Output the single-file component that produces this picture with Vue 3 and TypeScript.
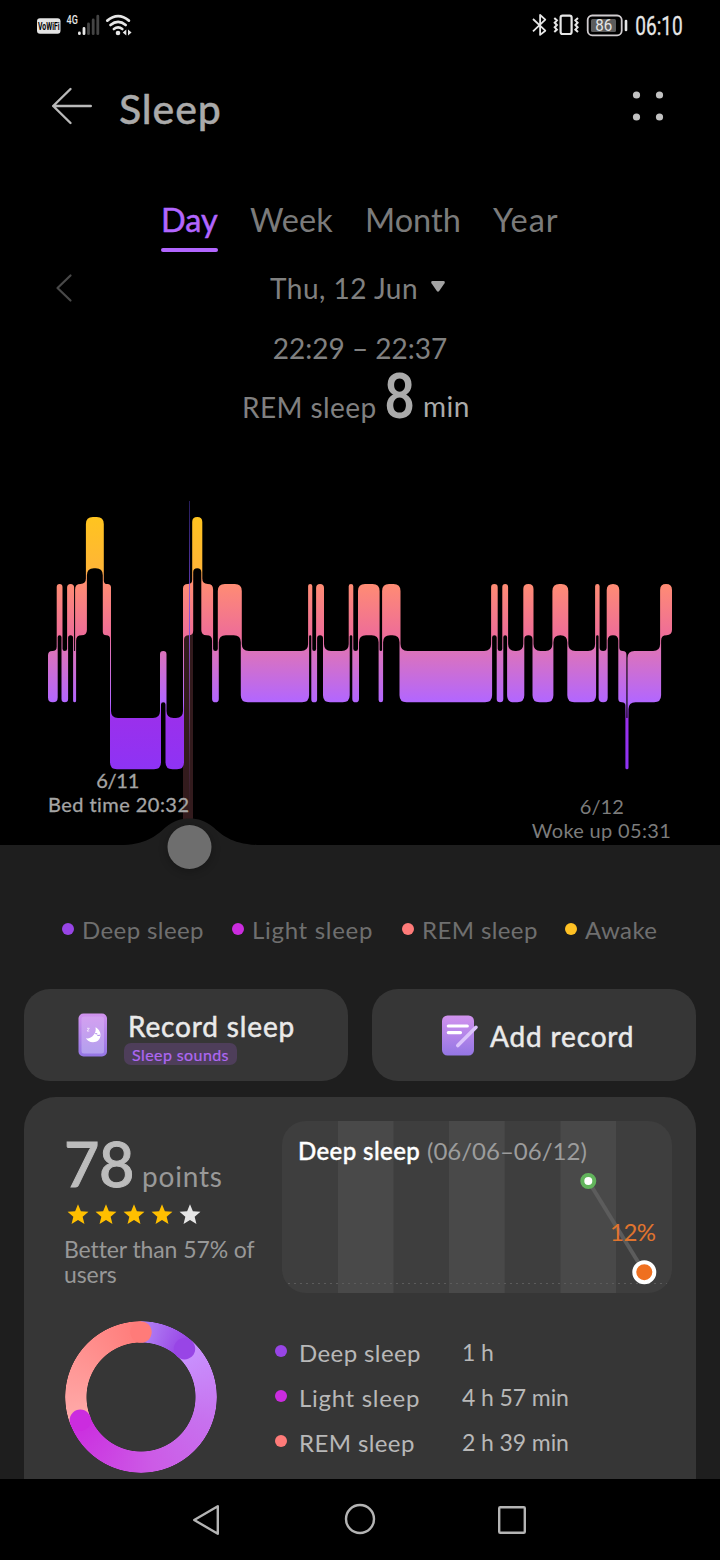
<script setup lang="ts">
interface Stage { label: string; color: string; value?: string }
type Level = 'awake' | 'rem' | 'light' | 'deep'
interface Point { x: number; y: number }

const stages: Stage[] = [
  { label: 'Deep sleep', color: '#9845e6', value: '1 h' },
  { label: 'Light sleep', color: '#cb2cdf', value: '4 h 57 min' },
  { label: 'REM sleep', color: '#ff7b79', value: '2 h 39 min' },
  { label: 'Awake', color: '#ffc124' },
]
const breakdown = stages.slice(0, 3)
const tabs = ['Day', 'Week', 'Month', 'Year']

const tops: Record<Level, number> = { awake: 517, rem: 584, light: 651, deep: 718 }
const BAR = 51.3

// Each entry is a stage and the x at which it ends.
const segments: [Level, number][] = [
  ['light', 57.2], ['rem', 62], ['light', 67.6], ['rem', 73.6], ['light', 75.6], ['rem', 86.4],
  ['awake', 103.3], ['rem', 110.5], ['deep', 160.5], ['light', 166], ['deep', 183.5],
  ['rem', 192.7], ['awake', 201.8], ['rem', 212.6], ['light', 218.3], ['rem', 241.3],
  ['light', 308.6], ['rem', 311.8], ['light', 316.6], ['rem', 323.5], ['light', 349.2],
  ['rem', 352.8], ['light', 358.5], ['rem', 379.1], ['light', 382.6], ['rem', 400],
  ['light', 491.6], ['rem', 497.2], ['light', 502.8], ['rem', 507.6], ['light', 523.8],
  ['rem', 533], ['light', 552.9], ['rem', 567.8], ['light', 595.6], ['rem', 599.1],
  ['light', 607.2], ['rem', 618.8], ['light', 625.9], ['deep', 628], ['light', 660.6], ['rem', 672],
]

// Closed ribbon: upper contour left to right, lower contour back, corners rounded.
function ribbon(): string {
  const half = 0.5
  const upper: Point[] = [{ x: 48, y: tops[segments[0][0]] }]
  const lower: Point[] = [{ x: 48, y: tops[segments[0][0]] + BAR }]
  for (let i = 0; i < segments.length - 1; i++) {
    const [level, x] = segments[i]
    const a = tops[level]
    const b = tops[segments[i + 1][0]]
    const shift = b < a ? -half : half
    upper.push({ x: x + shift, y: a }, { x: x + shift, y: b })
    lower.push({ x: x - shift, y: a + BAR }, { x: x - shift, y: b + BAR })
  }
  const last = segments[segments.length - 1]
  upper.push({ x: last[1], y: tops[last[0]] })
  lower.push({ x: last[1], y: tops[last[0]] + BAR })
  const pts = [...upper, ...lower.reverse()]
  const n = pts.length
  const dist = (p: Point, q: Point) => Math.abs(p.x - q.x) + Math.abs(p.y - q.y)
  const toward = (p: Point, q: Point, r: number): string => {
    const d = dist(p, q) || 1
    return `${(p.x + ((q.x - p.x) * r) / d).toFixed(2)} ${(p.y + ((q.y - p.y) * r) / d).toFixed(2)}`
  }
  let d = ''
  pts.forEach((p, i) => {
    const prev = pts[(i + n - 1) % n]
    const next = pts[(i + 1) % n]
    const r = Math.min(7, dist(p, prev) / 2, dist(p, next) / 2)
    d += `${i ? 'L' : 'M'}${toward(p, prev, r)}Q${p.x} ${p.y} ${toward(p, next, r)}`
  })
  return d + 'Z'
}
const sleepPath = ribbon()

function star(cx: number): string {
  const pts: string[] = []
  for (let i = 0; i < 10; i++) {
    const r = i % 2 ? 4.9 : 11
    const a = -Math.PI / 2 + (i * Math.PI) / 5
    pts.push(`${(cx + r * Math.cos(a)).toFixed(2)},${(13.2 + r * Math.sin(a)).toFixed(2)}`)
  }
  return pts.join(' ')
}
</script>

<template>
  <div class="page">
    <div class="status">
      <svg width="720" height="50" viewBox="0 0 720 50">
        <rect x="37" y="18.3" width="23.5" height="15.4" rx="3" fill="#e4e4e4" />
        <text x="38" y="29.800" class="vowifi" textLength="21.500" lengthAdjust="spacingAndGlyphs">VoWiFi</text>
        <text x="66.500" y="24.300" class="net" textLength="11.300" lengthAdjust="spacingAndGlyphs">4G</text>
        <g stroke-width="2.8" stroke-linecap="round" stroke="#e6e6e6">
          <path d="M79.4 33v.7M84 28.4v5.3" />
          <path d="M88.5 24v9.7M93.2 20v13.7M97.8 16.2v17.5" stroke="#444" />
        </g>
        <g fill="none" stroke="#e6e6e6" stroke-width="2.7" stroke-linecap="round">
          <path d="M107.3 20.600q10.800-9 21.600 0M110.500 25q7.600-6.200 15.200 0M113.900 29q4.200-3.200 8.400 0" />
        </g>
        <circle cx="118" cy="33" r="2.300" fill="#e6e6e6" />
        <path d="M126.300 29.400v6.200l-3.600-3.100zM128 29.400v6.200l3.600-3.100z" fill="#e6e6e6" />
        <path d="M533 19l12.300 11.700-5.200 4.200V15l5.200 4.600L533 31.300" fill="none" stroke="#e6e6e6" stroke-width="1.800" stroke-linejoin="round" />
        <rect x="560.600" y="15.600" width="11" height="18.400" rx="2" fill="none" stroke="#e6e6e6" stroke-width="2.200" />
        <path d="M554.300 18l2.600 2.400-2.200 2.300 2.200 2.300-2.200 2.300 2.200 2.300-2.600 2.400M578 18l-2.600 2.400 2.200 2.300-2.200 2.300 2.200 2.300-2.200 2.300 2.600 2.400" fill="none" stroke="#e6e6e6" stroke-width="2" />
        <rect x="587.700" y="15.500" width="34" height="19.800" rx="4.500" fill="none" stroke="#d0cccf" stroke-width="1.800" />
        <rect x="591" y="19" width="25" height="13" rx="1.500" fill="#5c5c5c" />
        <path d="M626 21v9" stroke="#e6e6e6" stroke-width="2.600" stroke-linecap="round" />
        <text x="595.300" y="31" class="battery" textLength="17" lengthAdjust="spacingAndGlyphs">86</text>
        <text x="635.300" y="34.800" class="clock" textLength="47.500" lengthAdjust="spacingAndGlyphs">06:10</text>
      </svg>
    </div>

    <header class="header">
      <svg class="back" width="42" height="38" viewBox="0 0 42 38" fill="none" stroke="#b9b9b9" stroke-width="2.400" stroke-linecap="round" stroke-linejoin="round">
        <path d="M19.500 2L2.200 19 19.500 36M2.200 19H39.800" />
      </svg>
      <h1>Sleep</h1>
      <svg class="more" width="32" height="32" viewBox="0 0 32 32" fill="#c2c2c2">
        <circle cx="4.500" cy="5" r="3.600" /><circle cx="27.500" cy="5" r="3.600" />
        <circle cx="4.500" cy="27" r="3.600" /><circle cx="27.500" cy="27" r="3.600" />
      </svg>
    </header>

    <nav class="tabs">
      <span v-for="(tab, i) in tabs" :key="tab" :class="['tab', { active: i === 0 }]">{{ tab }}</span>
    </nav>

    <div class="date">
      <svg width="18" height="30" viewBox="0 0 18 30" fill="none" stroke="#494949" stroke-width="2.200" stroke-linecap="round" stroke-linejoin="round">
        <path d="M15.500 2.500L2.500 15l13 12.500" />
      </svg>
      <span class="day">Thu, 12 Jun</span>
      <svg class="drop" width="16" height="13" viewBox="0 0 16 13" fill="#a3a3a3">
        <path d="M2.500 1h11q2 .4 1 2.300L9.200 11Q8 12.500 6.800 11L1.500 3.300Q.5 1.400 2.500 1z" />
      </svg>
    </div>
    <div class="range">22:29 – 22:37</div>
    <div class="reading">
      <span class="stage">REM sleep</span><span class="amount">8</span><span class="unit">min</span>
    </div>

    <svg class="chart" width="720" height="440" viewBox="0 440 720 440">
      <defs>
        <linearGradient id="levels" gradientUnits="userSpaceOnUse" x1="0" y1="517" x2="0" y2="769">
          <stop offset="0" stop-color="#ffc41f" />
          <stop offset=".203" stop-color="#ffb636" />
          <stop offset=".266" stop-color="#ff8c74" />
          <stop offset=".468" stop-color="#ee6d98" />
          <stop offset=".532" stop-color="#dc73bb" />
          <stop offset=".734" stop-color="#b266ff" />
          <stop offset=".798" stop-color="#9a30ec" />
          <stop offset="1" stop-color="#8e33f4" />
        </linearGradient>
        <linearGradient id="cursor" gradientUnits="userSpaceOnUse" x1="0" y1="501" x2="0" y2="818">
          <stop offset="0" stop-color="#5f45e0" stop-opacity=".4" />
          <stop offset=".4" stop-color="#8a4be0" stop-opacity=".95" />
          <stop offset=".65" stop-color="#7d3fa0" stop-opacity=".7" />
          <stop offset="1" stop-color="#5a3060" stop-opacity="0" />
        </linearGradient>
        <filter id="soft" x="-50%" y="-50%" width="200%" height="200%"><feGaussianBlur stdDeviation="4" /></filter>
      </defs>
      <rect x="183" y="632" width="10" height="200" fill="#331b1d" />
      <path :d="sleepPath" fill="url(#levels)" />
      <rect x="189" y="501" width="1" height="317" fill="url(#cursor)" />
      <path d="M0 845H124C148 844 158 834 166 827 173 821 181 818.500 189.500 818.500S206 821 213 827C221 834 231 844 257 845H720V880H0Z" fill="#1e1e1e" />
      <circle cx="189.500" cy="849" r="23" fill="#000" opacity=".22" filter="url(#soft)" />
      <circle cx="189.500" cy="847" r="22" fill="#6e6e6e" />
      <g class="bed" text-anchor="middle">
        <text x="117.800" y="787.500" textLength="43">6/11</text>
        <text x="118.500" y="811.500" textLength="141">Bed time 20:32</text>
      </g>
      <g class="woke" text-anchor="middle">
        <text x="601.800" y="813.500" textLength="44">6/12</text>
        <text x="601.300" y="837.800" textLength="139">Woke up 05:31</text>
      </g>
    </svg>

    <div class="legend">
      <div v-for="s in stages" :key="s.label" class="legend-item">
        <i class="dot" :style="{ background: s.color }"></i>{{ s.label }}
      </div>
    </div>

    <div class="actions">
      <button class="action record">
        <svg width="30" height="44" viewBox="0 0 30 44">
          <defs>
            <linearGradient id="phone" x1="0" y1="0" x2="0" y2="1"><stop stop-color="#d193ee" /><stop offset="1" stop-color="#9476e4" /></linearGradient>
            <linearGradient id="screen" x1="0" y1="0" x2="0" y2="1"><stop stop-color="#d3a0f0" /><stop offset="1" stop-color="#b3a0ee" /></linearGradient>
          </defs>
          <rect x=".5" y=".5" width="28.500" height="43" rx="5" fill="url(#phone)" />
          <rect x="3.500" y="3.500" width="22.500" height="37" rx="2.500" fill="url(#screen)" />
          <path d="M17.500 14.300C25 18 24 29.300 15 29.300 11.500 29.300 9 27.600 8 25.300 13 26.300 19 21 17.500 14.300z" fill="#fff" />
          <path d="M17.200 20.500l2 .4M19.400 22q1.200 1.200 2.500-.2" stroke="#b596ed" stroke-width="1.100" fill="none" />
          <path d="M9 15.300h2.300L9 18h2.300" stroke="#f1e2fb" stroke-width="1" fill="none" />
        </svg>
        <span class="record-text">
          <span class="action-title">Record sleep</span>
          <span class="badge">Sleep sounds</span>
        </span>
      </button>
      <button class="action add">
        <svg width="37" height="41" viewBox="0 0 37 41">
          <rect x="0" y=".5" width="32" height="40" rx="5.500" fill="url(#phone)" />
          <path d="M6.300 11h19M6.300 17.600h12.200" stroke="#fff" stroke-width="3.200" stroke-linecap="round" />
          <path d="M15.800 30.500L34 12.300" stroke="#dcc4fb" stroke-width="3.600" stroke-linecap="round" />
        </svg>
        <span class="action-title">Add record</span>
      </button>
    </div>

    <section class="card">
      <div class="summary">
        <div class="score">
          <div class="points"><b>78</b><span>points</span></div>
          <svg class="stars" width="140" height="25" viewBox="0 0 140 25">
            <polygon v-for="i in 5" :key="i" :points="star(i * 28 - 14)" :fill="i < 5 ? '#ffbf00' : '#e6e6e6'" />
          </svg>
          <p>Better than 57% of<br />users</p>
        </div>
        <div class="trend">
          <svg width="390" height="172" viewBox="282 1121 390 172">
            <path d="M338 1121h55.500v172H338zM449 1121h55.700v172H449zM560.500 1121h55.500v172h-55.500z" fill="#494949" />
            <path d="M288 1283.500H668" stroke="#5c5c5c" stroke-width="1.200" stroke-dasharray="2 4" />
            <path d="M588.300 1181L644.300 1272" stroke="#5c5c5c" stroke-width="4" />
            <circle cx="588.300" cy="1181" r="6" fill="#fff" stroke="#62b45c" stroke-width="4" />
            <text class="percent" x="610" y="1240.700" textLength="46">12%</text>
            <circle cx="644.300" cy="1272.200" r="10" fill="#ef7020" stroke="#fff" stroke-width="4" />
          </svg>
          <div class="trend-title"><b>Deep sleep</b><span>(06/06–06/12)</span></div>
        </div>
      </div>
      <div class="details">
        <div class="ring">
          <svg width="152" height="152" viewBox="65 1321 152 152">
            <circle cx="141" cy="1332.100" r="10.700" fill="#ff7b79" />
            <circle cx="184.500" cy="1348.700" r="10.700" fill="#9845e6" />
            <circle cx="80.300" cy="1420.200" r="10.700" fill="#cb2cdf" />
          </svg>
        </div>
        <div class="rows">
          <div v-for="s in breakdown" :key="s.label" class="row">
            <i class="dot" :style="{ background: s.color }"></i>
            <span class="row-label">{{ s.label }}</span>
            <span class="row-value">{{ s.value }}</span>
          </div>
        </div>
      </div>
    </section>

    <footer class="system">
      <svg width="720" height="81" viewBox="0 1479 720 81" fill="none" stroke="#b4b4b4" stroke-width="2.400" stroke-linejoin="round">
        <path d="M194.200 1520L217.800 1506.200V1533.800Z" />
        <circle cx="360" cy="1519" r="14" />
        <rect x="499.200" y="1507.200" width="25.600" height="25.600" rx="1" />
      </svg>
    </footer>
  </div>
</template>

<style>
body { margin: 0; background: #000; }
</style>

<style scoped>
.page { width: 720px; height: 1560px; overflow: hidden; display: flex; flex-direction: column; background: #1e1e1e; font-family: Lato, "Noto Sans", sans-serif; font-variant-ligatures: none; }
.page > * { flex: none; box-sizing: border-box; }
svg { display: block; }
.status { height: 50px; background: #000; }
.status text { fill: #e6e6e6; font-family: Roboto, sans-serif; }
.status .vowifi { fill: #000; font-size: 10px; font-weight: 700; }
.status .net { font-size: 13.5px; font-weight: 500; }
.status .battery { font-size: 17px; font-weight: 400; }
.status .clock { font-size: 25px; font-weight: 400; stroke: #e6e6e6; stroke-width: .3px; }
.header { height: 117px; padding: 0 56px 0 50.5px; display: flex; align-items: center; background: #000; }
.back, .more { margin-bottom: 5px; }
.more { margin-left: auto; }
h1 { margin: 0 0 0 26.5px; font-size: 41px; line-height: 50px; font-weight: 500; color: #aaa; letter-spacing: .9px; -webkit-text-stroke: .4px; }
.tabs { height: 85px; padding: 29px 0 0 161px; display: grid; grid-template-columns: 89px 115px 128px auto; background: #000; }
.tab { width: max-content; height: 56px; line-height: 47px; font-size: 32.5px; letter-spacing: 0; color: #7b7b7b; white-space: nowrap; }
.tab:last-child { letter-spacing: .9px; }
.tab.active { width: 57px; color: #b266ff; -webkit-text-stroke: .5px; display: flex; flex-direction: column; justify-content: space-between; }
.tab.active::after { content: ""; flex: none; height: 4px; border-radius: 2px; background: #b266ff; }
.date { height: 72px; padding-left: 55px; display: flex; align-items: center; background: #000; }
.day { width: 161px; margin-left: 197px; font-size: 28px; line-height: 40px; color: #808080; letter-spacing: .5px; white-space: nowrap; }
.drop { margin: 0 0 3px -1px; }
.range { height: 41px; line-height: 48px; text-align: center; font-size: 28px; color: #808080; background: #000; }
.reading { height: 75px; padding: 2px 0 0 242px; line-height: 60px; font-size: 28px; color: #808080; background: #000; display: flex; align-items: baseline; }
.stage { width: 142px; letter-spacing: .4px; }
.amount { width: 39px; font-family: Roboto, sans-serif; font-size: 63px; font-weight: 500; color: #aaa; line-height: 60px; transform: scaleX(.87); transform-origin: left; }
.unit { color: #aaa; letter-spacing: .5px; transform: translateY(-1px); }
.chart { background: #000; }
.chart text { font-size: 20px; }
.bed { fill: #a5a5a5; stroke: #a5a5a5; stroke-width: .3px; }
.woke { fill: #7c7c7c; }
.legend { height: 109px; padding: 0 0 10px 62px; display: grid; grid-template-columns: 170px 170px 163px auto; align-items: center; font-size: 24px; color: #6f6f6f; letter-spacing: .4px; }
.legend-item { display: flex; align-items: center; white-space: nowrap; }
.legend-item:nth-child(2) { letter-spacing: .7px; }
.dot { flex: none; width: 12px; height: 12px; border-radius: 50%; margin: 0 8px 1px 0; }
.actions { height: 108px; padding: 0 24px; display: flex; gap: 24px; }
.action { width: 324px; height: 92px; box-sizing: border-box; padding: 0; border: 0; border-radius: 26px; background: #363636; font-family: inherit; display: flex; align-items: center; text-align: left; }
.action-title { font-size: 28px; line-height: 34px; color: #eaeaea; letter-spacing: .85px; -webkit-text-stroke: .5px; white-space: nowrap; }
.record { padding-left: 53.5px; }
.record-text { margin: 3px 0 0 16.5px; display: flex; flex-direction: column; align-items: flex-start; }
.record .action-title { margin-left: 4px; }
.badge { width: 113px; height: 22px; border-radius: 7px; background: #4e3e5a; color: #ae68f2; font-size: 16px; line-height: 23px; text-align: center; letter-spacing: .4px; -webkit-text-stroke: .2px; white-space: nowrap; }
.add { padding-left: 70px; }
.add .action-title { margin: 2px 0 0 11px; }
.card { height: 382px; margin: 0 24px; padding: 24px 24px 0 40px; border-radius: 32px 32px 0 0; background: #363636; overflow: hidden; }
.summary { display: flex; height: 172px; }
.score { width: 218px; flex: none; }
.points { height: 80px; display: flex; align-items: baseline; line-height: 85px; }
.points b { width: 78px; font-size: 61px; font-weight: 500; color: #bcbcbc; letter-spacing: -.5px; -webkit-text-stroke: 1px; }
.points span { font-size: 28px; color: #999; letter-spacing: .8px; }
.stars { margin-top: 1px; }
.score p { margin: 10px 0 0; font-size: 23px; line-height: 25px; color: #989898; letter-spacing: -.1px; white-space: nowrap; }
.trend { position: relative; width: 390px; height: 172px; border-radius: 24px; overflow: hidden; background: #3e3e3e; }
.trend-title { position: absolute; left: 16px; top: 14px; line-height: 32px; font-size: 24px; display: flex; white-space: nowrap; }
.trend-title b { width: 129px; font-weight: 500; color: #fff; -webkit-text-stroke: .4px; letter-spacing: .4px; }
.trend-title span { color: #9c9c9c; letter-spacing: 0; }
.percent { font-size: 24px; fill: #e0742e; }
.details { display: flex; padding-top: 28px; }
.ring { width: 152px; height: 152px; margin-left: 1px; border-radius: 50%; background: radial-gradient(circle, #363636 54.200px, transparent 54.900px), radial-gradient(circle, transparent 75.400px, #363636 76.100px), conic-gradient(#b385f5 0deg, #9845e6 40deg, #9845e6 42deg, #c994ff 42deg, #c771ee 110deg, #cc5be6 170deg, #cb2cdf 249deg, #ffabaa 249deg, #ff7b79 360deg); }
.rows { margin: 7px 0 0 58px; }
.row { height: 45px; display: flex; align-items: center; font-size: 24px; color: #b8b8b8; }
.row .dot { margin: 0; }
.row-label { width: 163px; margin-left: 12px; letter-spacing: .4px; margin-top: 3px; }
.row:nth-child(2) .row-label { letter-spacing: .7px; }
.row-value { font-size: 23px; letter-spacing: -.1px; margin-top: 3px; }
.system { height: 81px; background: #000; }
</style>
